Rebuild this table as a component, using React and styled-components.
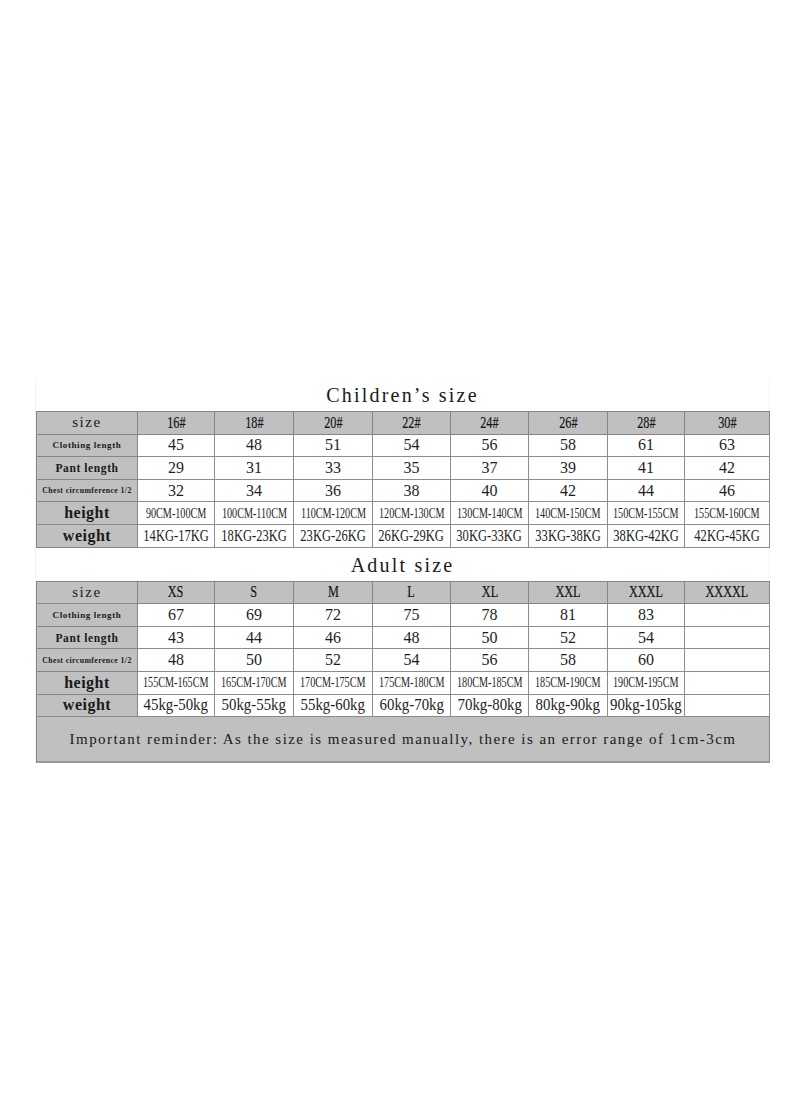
import React from 'react';
import styled, { createGlobalStyle } from 'styled-components';

const GlobalStyle = createGlobalStyle`
  html, body {
    margin: 0;
    padding: 0;
    background: #ffffff;
  }
  body {
    font-family: 'Liberation Serif', 'Times New Roman', serif;
    color: #1e1e1e;
  }
`;

const COLS = [101, 77, 79, 79, 78, 78, 79, 77, 85];

const children = {
  title: 'Children’s size',
  sizes: ['16#', '18#', '20#', '22#', '24#', '26#', '28#', '30#'],
  clothing: [45, 48, 51, 54, 56, 58, 61, 63],
  pant: [29, 31, 33, 35, 37, 39, 41, 42],
  chest: [32, 34, 36, 38, 40, 42, 44, 46],
  height: [
    '90CM-100CM', '100CM-110CM', '110CM-120CM', '120CM-130CM',
    '130CM-140CM', '140CM-150CM', '150CM-155CM', '155CM-160CM',
  ],
  weight: [
    '14KG-17KG', '18KG-23KG', '23KG-26KG', '26KG-29KG',
    '30KG-33KG', '33KG-38KG', '38KG-42KG', '42KG-45KG',
  ],
  weightSqueeze: 0.76,
};

const adult = {
  title: 'Adult size',
  sizes: ['XS', 'S', 'M', 'L', 'XL', 'XXL', 'XXXL', 'XXXXL'],
  clothing: [67, 69, 72, 75, 78, 81, 83, ''],
  pant: [43, 44, 46, 48, 50, 52, 54, ''],
  chest: [48, 50, 52, 54, 56, 58, 60, ''],
  height: [
    '155CM-165CM', '165CM-170CM', '170CM-175CM', '175CM-180CM',
    '180CM-185CM', '185CM-190CM', '190CM-195CM', '',
  ],
  weight: [
    '45kg-50kg', '50kg-55kg', '55kg-60kg', '60kg-70kg',
    '70kg-80kg', '80kg-90kg', '90kg-105kg', '',
  ],
  weightSqueeze: 0.9,
};

const Page = styled.div`
  min-height: 1096px;
  box-sizing: border-box;
  padding: 378px 0 0 35px;
`;

const Sheet = styled.div`
  width: 735px;
  border-left: 1px solid #f2f2f2;
  border-right: 1px solid #f4f4f4;
  box-sizing: border-box;
`;

const TitleBand = styled.div`
  height: 33px;
  display: flex;
  align-items: flex-end;
  justify-content: center;
  padding-bottom: 6px;
  box-sizing: border-box;
`;

const Title = styled.h2`
  margin: 0;
  font-family: 'Liberation Serif', 'Times New Roman', serif;
  font-weight: normal;
  font-size: 20px;
  line-height: 20px;
  letter-spacing: 2.2px;
  color: #1a1a1a;
`;

const Table = styled.table`
  width: 734px;
  border-collapse: collapse;
  table-layout: fixed;
`;

const Row = styled.tr`
  height: ${({ $h }) => $h || 22.6}px;
`;

const Label = styled.th`
  background: #c0c0c0;
  border: 1px solid #858585;
  padding: 0;
  text-align: center;
  white-space: nowrap;
  overflow: hidden;
  font-size: ${({ $size }) => $size}px;
  font-weight: ${({ $bold }) => ($bold ? 'bold' : 'normal')};
  letter-spacing: ${({ $spacing }) => $spacing}px;
  color: #1a1a1a;
`;

const Head = styled.th`
  background: #c0c0c0;
  border: 1px solid #858585;
  padding: 0;
  font-weight: normal;
  font-size: 16.5px;
  white-space: nowrap;
  color: #141414;
  -webkit-text-stroke: 0.2px #141414;
`;

const Cell = styled.td`
  background: #ffffff;
  border: 1px solid #8c8c8c;
  padding: 0;
  text-align: center;
  white-space: nowrap;
  font-size: ${({ $size }) => $size || 16}px;
  color: #1e1e1e;
`;

const Center = styled.div`
  display: flex;
  justify-content: center;
  align-items: center;
  white-space: nowrap;
`;

const Squeeze = styled.span`
  flex: none;
  display: inline-block;
  transform: scaleX(${({ $x }) => $x});
  transform-origin: center;
`;

const Reminder = styled.td`
  height: 44px;
  background: #c0c0c0;
  border: 1px solid #858585;
  border-bottom: 2px solid #9a9a9a;
  padding: 0;
  text-align: center;
  font-size: 15px;
  letter-spacing: 1.45px;
  white-space: nowrap;
  color: #1a1a1a;
`;

function Squeezed({ x, children }) {
  return (
    <Center>
      <Squeeze $x={x}>{children}</Squeeze>
    </Center>
  );
}

function DataRow({ label, values, labelSize, bold = true, spacing = 0.4, size, squeeze }) {
  return (
    <Row>
      <Label $size={labelSize} $bold={bold} $spacing={spacing}>
        {label}
      </Label>
      {values.map((v, i) => (
        <Cell key={i} $size={size}>
          {squeeze ? <Squeezed x={squeeze}>{v}</Squeezed> : v}
        </Cell>
      ))}
    </Row>
  );
}

function SizeTable({ data, children: footer }) {
  return (
    <>
      <TitleBand>
        <Title>{data.title}</Title>
      </TitleBand>
      <Table>
        <colgroup>
          {COLS.map((w, i) => (
            <col key={i} style={{ width: w }} />
          ))}
        </colgroup>
        <tbody>
          <Row>
            <Label $size={15} $spacing={1.6}>size</Label>
            {data.sizes.map(s => (
              <Head key={s}>
                <Squeezed x={0.74}>{s}</Squeezed>
              </Head>
            ))}
          </Row>
          <DataRow label='Clothing length' labelSize={9} spacing={0.6} values={data.clothing} />
          <DataRow label='Pant length' labelSize={11.5} spacing={0.6} values={data.pant} />
          <DataRow label='Chest circumference 1/2' labelSize={7.8} spacing={0.4} values={data.chest} />
          <DataRow label='height' labelSize={16} spacing={0.5} values={data.height} size={14.5} squeeze={0.7} />
          <DataRow label='weight' labelSize={16} spacing={0.5} values={data.weight} size={16.5} squeeze={data.weightSqueeze} />
          {footer}
        </tbody>
      </Table>
    </>
  );
}

export default function App() {
  return (
    <Page>
      <GlobalStyle />
      <Sheet>
        <SizeTable data={children} />
        <SizeTable data={adult}>
          <tr>
            <Reminder colSpan={9}>
              Important reminder: As the size is measured manually, there is an error range of 1cm-3cm
            </Reminder>
          </tr>
        </SizeTable>
      </Sheet>
    </Page>
  );
}
